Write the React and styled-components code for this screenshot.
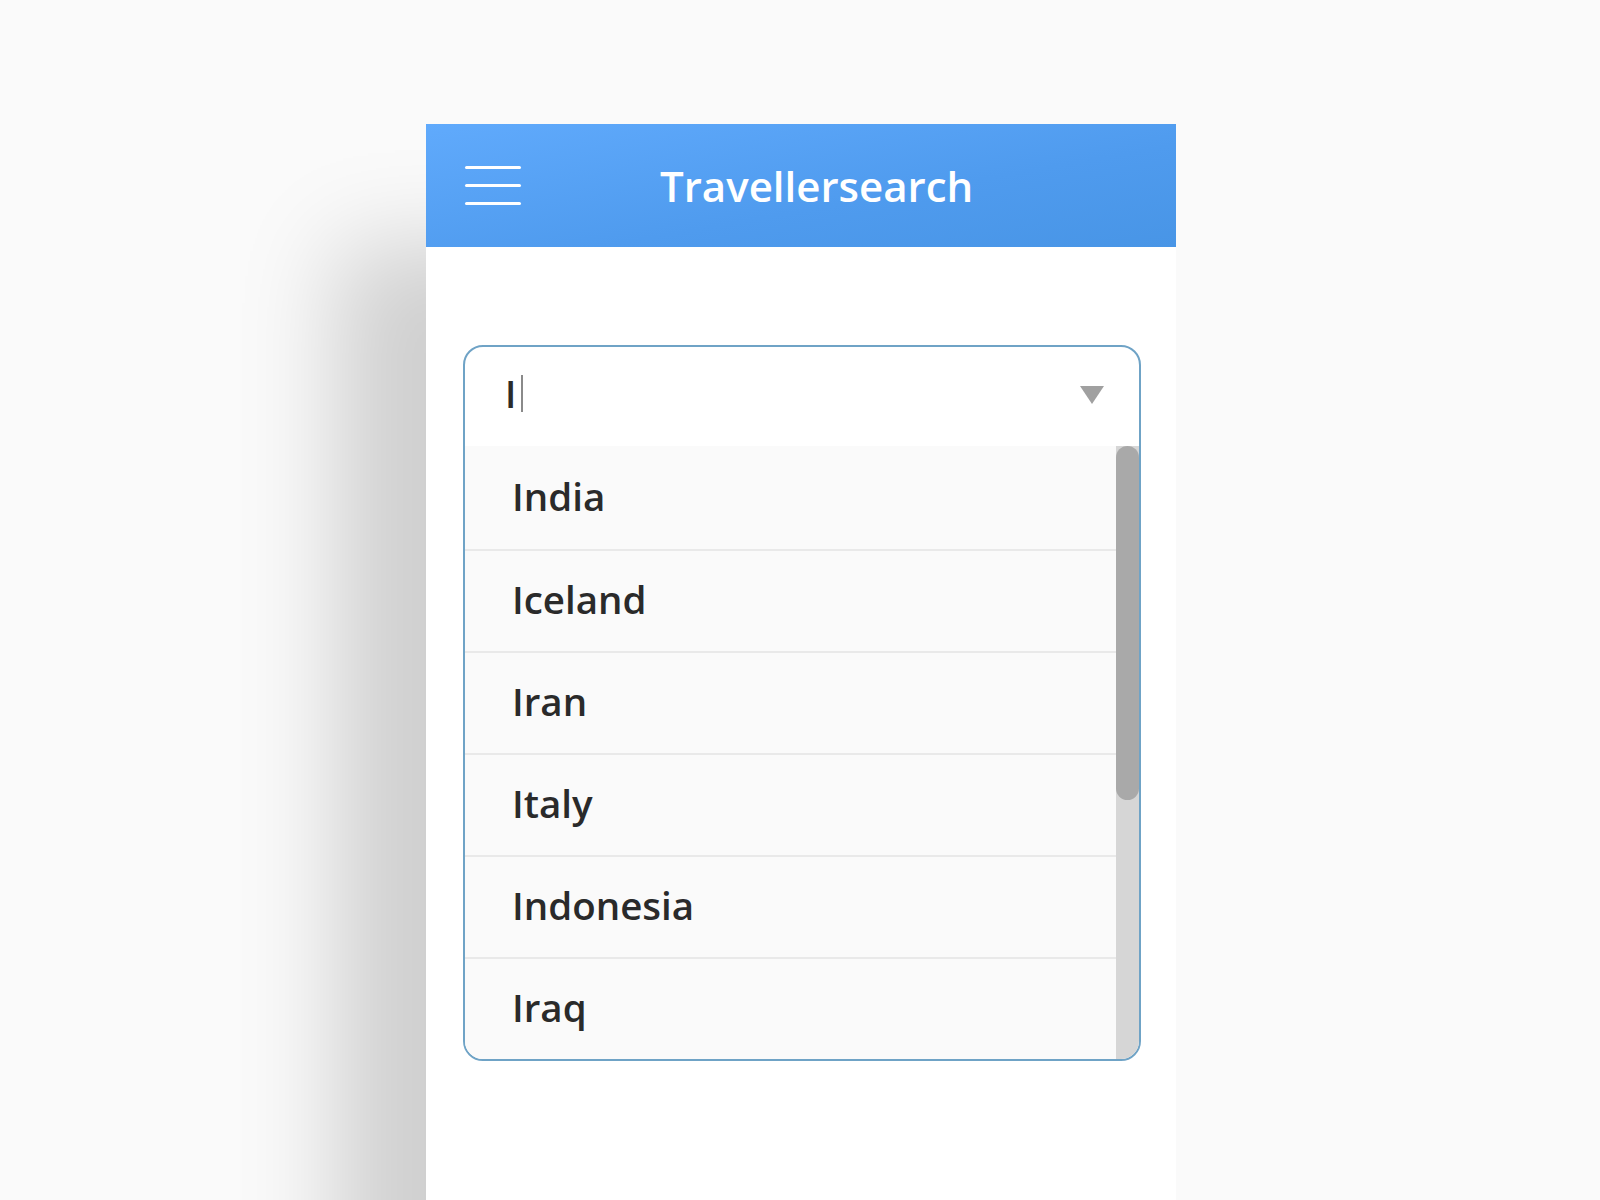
import styled, { createGlobalStyle } from "styled-components";

const GlobalStyle = createGlobalStyle`
  html, body {
    margin: 0;
    padding: 0;
    background: #fafafa;
    overflow: hidden;
  }
`;

const Page = styled.div`
  min-height: 100vh;
  display: flex;
  justify-content: center;
  align-items: flex-start;
  padding: 124px 0 0 2px;
  box-sizing: border-box;
  background: #fafafa;
  font-family: "Open Sans", "Noto Sans", sans-serif;
`;

const Card = styled.div`
  width: 750px;
  min-height: 1100px;
  background: #ffffff;
  box-shadow: -100px 110px 90px -10px rgba(0, 0, 0, 0.17);
`;

const Header = styled.header`
  height: 123px;
  display: flex;
  align-items: center;
  padding: 0 39px;
  background: linear-gradient(170deg, #60aafc 0%, #4f9bee 60%, #4895e6 100%);
`;

const MenuButton = styled.div`
  width: 56px;
  display: flex;
  flex-direction: column;
  gap: 15px;
  cursor: pointer;

  & span {
    display: block;
    height: 3px;
    border-radius: 2px;
    background: #ffffff;
  }
`;

const Title = styled.h1`
  margin: 0 0 0 139px;
  color: #ffffff;
  font-size: 42px;
  font-weight: 600;
  letter-spacing: 0;
`;

const Body = styled.main`
  padding: 98px 35px 98px 37px;
`;

const Combo = styled.div`
  border: 2px solid #6fa3c6;
  border-radius: 20px;
  overflow: hidden;
  background: #ffffff;
`;

const InputRow = styled.div`
  height: 99px;
  display: flex;
  align-items: center;
  justify-content: space-between;
  padding: 0 35px 6px 40px;
  box-sizing: border-box;
`;

const Typed = styled.div`
  display: flex;
  align-items: center;
  gap: 5px;
  font-size: 37px;
  font-weight: 600;
  color: #2b2b2b;
`;

const Caret = styled.span`
  display: block;
  width: 2px;
  height: 37px;
  background: #8a8a8a;
`;

const Arrow = styled.span`
  width: 0;
  height: 0;
  border-left: 12.5px solid transparent;
  border-right: 12.5px solid transparent;
  border-top: 18px solid #a0a0a0;
  margin-top: 2px;
`;

const ListArea = styled.div`
  display: flex;
`;

const List = styled.ul`
  flex: 1;
  margin: 0;
  padding: 0;
  list-style: none;
  background: #fafafa;
`;

const Option = styled.li`
  height: 102px;
  display: flex;
  align-items: center;
  padding: 0 0 4px 47px;
  box-sizing: border-box;
  font-size: 38.5px;
  font-weight: 600;
  color: #2a2a2a;
  border-bottom: 2px solid #e9e9e9;
  &:first-child {
    height: 105px;
  }
  &:last-child {
    height: 100px;
    border-bottom: none;
  }
`;

const Track = styled.div`
  width: 23px;
  background: #d6d6d6;
`;

const Thumb = styled.div`
  height: 354px;
  border-radius: 12px;
  background: #a9a9a9;
`;

const countries = ["India", "Iceland", "Iran", "Italy", "Indonesia", "Iraq"];

export default function App() {
  return (
    <>
      <GlobalStyle />
      <Page>
        <Card>
          <Header>
            <MenuButton>
              <span />
              <span />
              <span />
            </MenuButton>
            <Title>Travellersearch</Title>
          </Header>
          <Body>
            <Combo>
              <InputRow>
                <Typed>
                  I<Caret />
                </Typed>
                <Arrow />
              </InputRow>
              <ListArea>
                <List>
                  {countries.map((c) => (
                    <Option key={c}>{c}</Option>
                  ))}
                </List>
                <Track>
                  <Thumb />
                </Track>
              </ListArea>
            </Combo>
          </Body>
        </Card>
      </Page>
    </>
  );
}
